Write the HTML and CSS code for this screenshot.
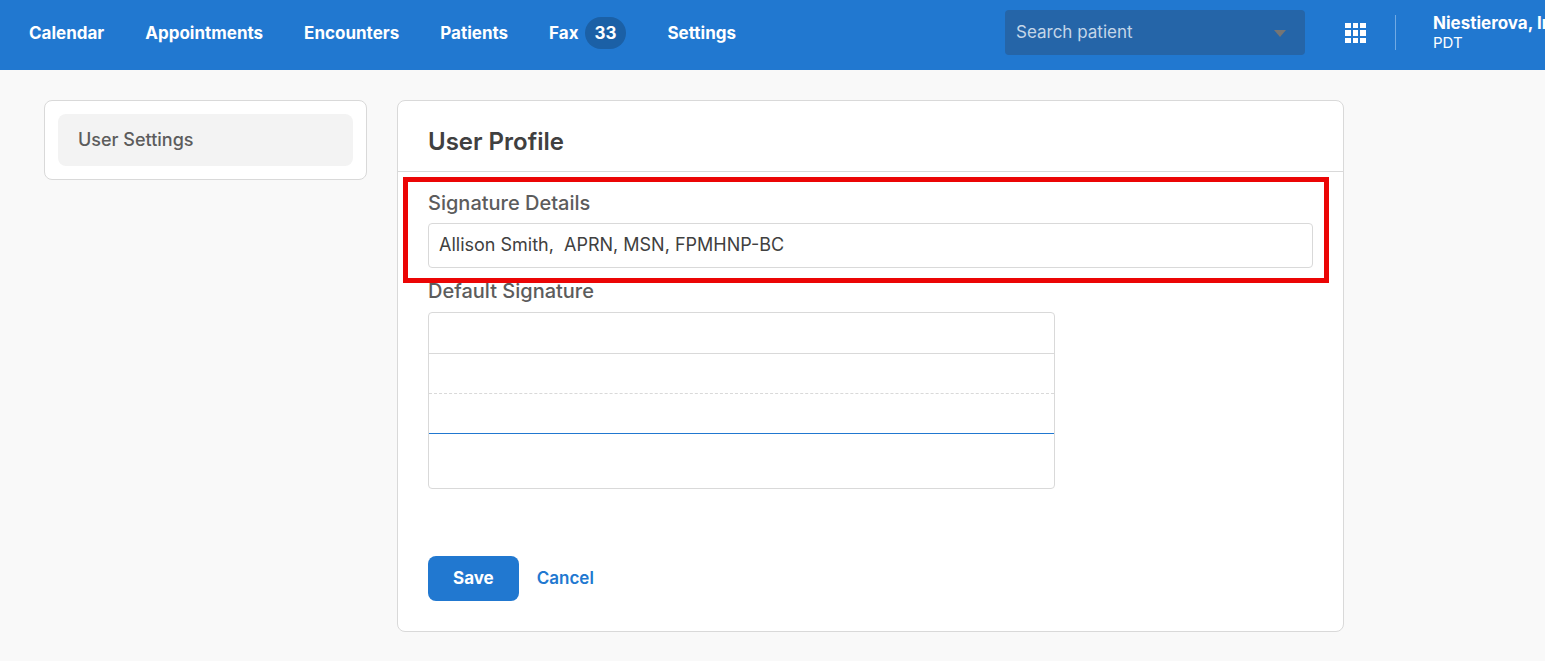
FILE: index.html
```html
<!DOCTYPE html>
<html lang="en">
<head>
<meta charset="utf-8">
<title>User Profile</title>
<meta name="viewport" content="width=device-width, initial-scale=1">
<link rel="stylesheet" href="styles.css">
</head>
<body>
<header class="topbar">
  <nav class="nav">
    <a class="nav-link" href="#">Calendar</a>
    <a class="nav-link" href="#">Appointments</a>
    <a class="nav-link" href="#">Encounters</a>
    <a class="nav-link" href="#">Patients</a>
    <a class="nav-link" href="#">Fax<span class="badge">33</span></a>
    <a class="nav-link" href="#">Settings</a>
  </nav>
  <div class="search">
    <input class="search-input" type="text" placeholder="Search patient" aria-label="Search patient">
    <svg class="search-caret" width="12" height="7" viewBox="0 0 12 7" aria-hidden="true"><path d="M0 0H12L6 7Z" fill="#757575"/></svg>
  </div>
  <button class="apps" type="button" aria-label="Apps">
    <svg width="21" height="21" viewBox="0 0 21 21" fill="#fff" aria-hidden="true">
      <path d="M0 1h6v5H0zM8 1h5v5H8zM15 1h6v5h-6zM0 8h6v6H0zM8 8h5v6H8zM15 8h6v6h-6zM0 16h6v5H0zM8 16h5v5H8zM15 16h6v5h-6z"/>
    </svg>
  </button>
  <div class="user">
    <div class="user-name">Niestierova, Irina</div>
    <div class="user-zone">PDT</div>
  </div>
</header>
<div class="page">
  <aside class="sidebar">
    <a class="sidebar-link" href="#">User Settings</a>
  </aside>
  <main class="card">
    <h1 class="card-title">User Profile</h1>
    <form class="form">
      <div class="field highlighted">
        <label class="label" for="details">Signature Details</label>
        <input class="text-input" id="details" type="text" value="Allison Smith,&nbsp; APRN, MSN, FPMHNP-BC">
      </div>
      <div class="field">
        <h2 class="label">Default Signature</h2>
        <div class="pad">
          <div class="pad-row"></div>
          <div class="pad-row dashed"></div>
          <div class="pad-row baseline"></div>
          <div class="pad-row last"></div>
        </div>
      </div>
      <div class="actions">
        <button class="save" type="button">Save</button>
        <a class="cancel" href="#">Cancel</a>
      </div>
    </form>
  </main>
</div>
</body>
</html>
```

FILE: styles.css
```css
* {
  box-sizing: border-box;
}

body {
  margin: 0;
  background: #f9f9f9;
  color: #404040;
  font: 400 18px/24px Inter, "Liberation Sans", sans-serif;
}

a {
  text-decoration: none;
}

button,
input {
  font: inherit;
}

.topbar {
  display: flex;
  align-items: center;
  padding: 10px 0 15px 29px;
  background: #2178d0;
  color: #fff;
  font-size: 17px;
  overflow: hidden;
}

.nav {
  display: flex;
  align-items: center;
  gap: 41px;
  margin-right: auto;
}

.nav-link {
  display: flex;
  align-items: center;
  gap: 6px;
  color: #fff;
  font-weight: 700;
}

.badge {
  padding: 4px 10px;
  border-radius: 16px;
  background: #1b60a6;
}

.search {
  position: relative;
  flex: 0 0 300px;
}

.search-input {
  display: block;
  width: 100%;
  height: 45px;
  padding: 0 40px 2px 11px;
  border: 0;
  border-radius: 4px;
  background: #2565a8;
  color: #fff;
}

.search-input::placeholder {
  color: #c4d6e8;
  opacity: 1;
}

.search-caret {
  position: absolute;
  top: 20px;
  right: 19px;
}

.apps {
  display: flex;
  margin: 0 29px 0 40px;
  padding: 0;
  border: 0;
  background: none;
}

.user {
  flex: 0 0 150px;
  min-width: 0;
  height: 35px;
  padding-left: 37px;
  border-left: 1px solid #71aae4;
  white-space: nowrap;
}

.user-name {
  margin-top: -2px;
  font-weight: 700;
  line-height: 20px;
}

.user-zone {
  font-size: 15px;
  line-height: 20px;
}

.page {
  display: grid;
  grid-template-columns: 323px minmax(0, 1fr);
  align-items: start;
  gap: 30px;
  max-width: 1344px;
  padding: 30px 0 29px 44px;
}

.sidebar,
.card {
  border: 1px solid #d9d9d9;
  border-radius: 8px;
  background: #fff;
}

.sidebar {
  padding: 13px;
}

.sidebar-link {
  display: block;
  padding: 14px 20px;
  border-radius: 8px;
  background: #f3f3f3;
  color: #5c5c5c;
  font-weight: 500;
}

.card-title {
  margin: 0;
  padding: 25px 30px 13px;
  border-bottom: 1px solid #d9d9d9;
  font-size: 24px;
  font-weight: 600;
  line-height: 32px;
}

.form {
  padding: 19px 30px 30px;
}

.field {
  margin-bottom: 12px;
}

.highlighted {
  position: relative;
  margin-bottom: 11px;
}

.highlighted::after {
  content: "";
  position: absolute;
  inset: -14px -16px -15px -25px;
  border: 5px solid #eb0505;
  pointer-events: none;
}

.label {
  display: block;
  margin: 0 0 8px;
  color: #5c5c5c;
  font-size: 20px;
  font-weight: 500;
  line-height: 24px;
}

.text-input {
  display: block;
  width: 100%;
  height: 45px;
  padding: 0 10px 2px;
  border: 1px solid #d9d9d9;
  border-radius: 4px;
  background: #fff;
  color: #404040;
}

.pad {
  max-width: 627px;
  margin-top: 9px;
  border: 1px solid #d9d9d9;
  border-radius: 4px;
}

.pad-row {
  height: 40px;
  border-bottom: 1px solid #d9d9d9;
}

.pad-row:first-child {
  height: 41px;
}

.dashed {
  border-bottom-style: dashed;
}

.baseline {
  border-bottom-color: #2178d0;
}

.last {
  height: 54px;
  border-bottom: 0;
}

.actions {
  display: flex;
  align-items: center;
  gap: 18px;
  margin-top: 67px;
  font-size: 17px;
}

.save {
  height: 45px;
  padding: 0 25px 2px;
  border: 0;
  border-radius: 8px;
  background: #2178d0;
  color: #fff;
  font-weight: 700;
}

.cancel {
  padding-bottom: 2px;
  color: #2178d0;
  font-weight: 600;
}
```
